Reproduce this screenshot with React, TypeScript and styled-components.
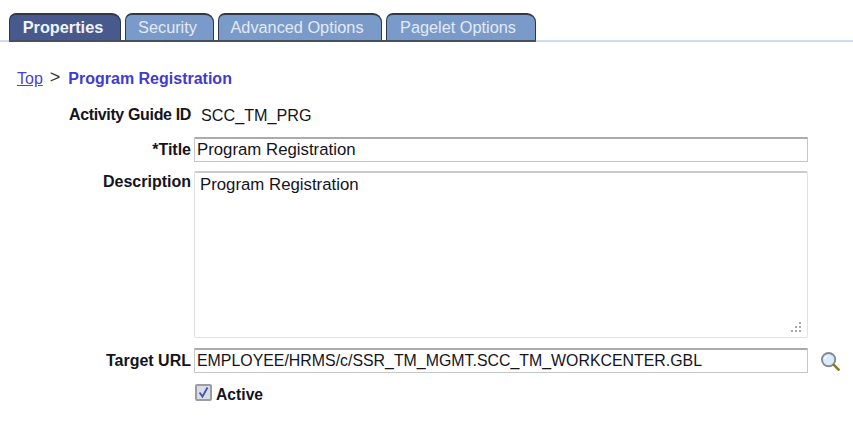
import React from "react";
import styled, { createGlobalStyle } from "styled-components";

const GlobalStyle = createGlobalStyle`
  html, body {
    margin: 0;
    padding: 0;
    background: #fff;
    font-family: "Liberation Sans", Arial, sans-serif;
  }
`;

const Page = styled.div`
  width: 853px;
  height: 422px;
  overflow: hidden;
  padding-top: 13px;
  box-sizing: border-box;
`;

const TabBar = styled.div`
  display: flex;
  align-items: flex-end;
  padding-left: 9px;
  height: 29px;
  box-sizing: border-box;
  border-bottom: 2px solid #cfdcf3;
`;

const TabGroup = styled.div`
  display: flex;
  gap: 4px;
  margin-bottom: -2px;
  border-bottom: 2px solid #4a4f5c;
`;

const Tab = styled.div<{ $active?: boolean; $width: number; $pad: number }>`
  width: ${(p) => p.$width}px;
  height: 27px;
  box-sizing: border-box;
  display: flex;
  align-items: center;
  justify-content: center;
  padding: 0 ${(p) => p.$pad}px 1px 0;
  border: 1px solid #2f3848;
  border-width: 2px 1px 0 1px;
  border-radius: 7px 9px 0 0;
  font-size: 16.3px;
  font-weight: ${(p) => (p.$active ? 700 : 400)};
  color: ${(p) => (p.$active ? "#f1f3f9" : "#e3eaf5")};
  background: ${(p) => (p.$active ? "#47598d" : "#7a9bc9")};
`;

const Crumbs = styled.div`
  display: flex;
  align-items: center;
  margin: 27px 0 0 17px;
  height: 20px;
  font-size: 16px;
`;

const TopLink = styled.a`
  color: #4a3fd6;
  text-decoration: underline;
`;

const Chevron = styled.span`
  color: #333;
  font-size: 18px;
  margin: -3px 8px 0 7px;
`;

const CrumbTitle = styled.span`
  color: #3f3bd0;
  font-weight: 700;
  font-size: 16px;
`;

const Form = styled.div`
  display: grid;
  grid-template-columns: 191px 614px 1fr;
  column-gap: 3px;
  margin-top: 13px;
  font-size: 16px;
  color: #14141c;
`;

const Label = styled.div<{ $top?: boolean; $mt?: number; $tight?: boolean }>`
  font-weight: 700;
  text-align: right;
  white-space: nowrap;
  align-self: ${(p) => (p.$top ? "start" : "center")};
  padding-top: ${(p) => (p.$top ? "2px" : "0")};
  margin-top: ${(p) => p.$mt ?? 0}px;
  letter-spacing: ${(p) => (p.$tight ? "-0.35px" : "normal")};
`;

const ReadOnlyValue = styled.div`
  grid-column: 2 / 4;
  height: 26px;
  display: flex;
  align-items: center;
  padding-left: 7px;
  font-size: 16.2px;
`;

const TextField = styled.div<{ $height: number; $mt: number; $size: number }>`
  height: ${(p) => p.$height}px;
  margin-top: ${(p) => p.$mt}px;
  box-sizing: border-box;
  display: flex;
  align-items: center;
  padding-left: 2px;
  border: 1px solid #c4c6c8;
  border-top: 2px solid #a9abae;
  border-radius: 1px;
  background: #fff;
  font-size: ${(p) => p.$size}px;
  white-space: nowrap;
`;

const TextArea = styled.div`
  position: relative;
  height: 167px;
  margin-top: 9px;
  box-sizing: border-box;
  padding: 2px 5px;
  border: 1px solid #dfe3e8;
  border-top: 2px solid #c9cbce;
  border-radius: 2px;
  font-size: 16.8px;
`;

const Grip = styled.svg`
  position: absolute;
  right: 6px;
  bottom: 5px;
`;

const IconCell = styled.div`
  display: flex;
  align-items: flex-start;
  padding: 14px 0 0 10px;
`;

const ActiveRow = styled.div`
  grid-column: 2 / 4;
  display: flex;
  align-items: center;
  gap: 4px;
  margin-top: 13px;
  padding-left: 1px;
  font-size: 15.7px;
  font-weight: 700;
`;

const CheckBox = styled.span`
  width: 17px;
  height: 17px;
  margin-top: -6px;
  box-sizing: border-box;
  display: inline-flex;
  align-items: center;
  justify-content: center;
  border: 2px solid #9a9da2;
  border-radius: 2px;
  background: #d8dce8;
`;

const tabs = [
  { label: "Properties", width: 112, pad: 4, active: true },
  { label: "Security", width: 89, pad: 4 },
  { label: "Advanced Options", width: 164, pad: 6 },
  { label: "Pagelet Options", width: 150, pad: 6 },
];

const gripDots = [
  [9, 0],
  [5, 4],
  [9, 4],
  [1, 8],
  [5, 8],
  [9, 8],
];

const App = () => {
  return (
    <Page>
      <GlobalStyle />
      <TabBar>
        <TabGroup>
          {tabs.map((t) => (
            <Tab key={t.label} $active={t.active} $width={t.width} $pad={t.pad}>
              {t.label}
            </Tab>
          ))}
        </TabGroup>
      </TabBar>

      <Crumbs>
        <TopLink>Top</TopLink>
        <Chevron>&gt;</Chevron>
        <CrumbTitle>Program Registration</CrumbTitle>
      </Crumbs>

      <Form>
        <Label $tight>Activity Guide ID</Label>
        <ReadOnlyValue>SCC_TM_PRG</ReadOnlyValue>

        <Label $mt={9}>*Title</Label>
        <TextField $height={25} $mt={9} $size={16.8}>Program Registration</TextField>
        <div />

        <Label $top $mt={9}>Description</Label>
        <TextArea>
          Program Registration
          <Grip width="11" height="10" viewBox="0 0 11 10">
            <g fill="#a8a8a8">
              {gripDots.map(([x, y]) => (
                <rect key={`${x}-${y}`} x={x} y={y} width="2" height="2" />
              ))}
            </g>
          </Grip>
        </TextArea>
        <div />

        <Label $mt={10}>Target URL</Label>
        <TextField $height={25} $mt={10} $size={15.9}>EMPLOYEE/HRMS/c/SSR_TM_MGMT.SCC_TM_WORKCENTER.GBL</TextField>
        <IconCell>
          <svg width="19" height="19" viewBox="0 0 20 20">
            <circle cx="8" cy="8" r="7" fill="#d7ebfb" stroke="#858a91" strokeWidth="2" />
            <path d="M4 7.5a4.2 4.2 0 0 1 3.5-3.5" fill="none" stroke="#fff" strokeWidth="1.4" />
            <path d="M13.5 13.5l5 5" stroke="#8a7a2c" strokeWidth="2.8" strokeLinecap="round" />
          </svg>
        </IconCell>

        <div />
        <ActiveRow>
          <CheckBox>
            <svg width="13" height="13" viewBox="0 0 13 13">
              <path d="M2.5 6.5l3 4 5-9" fill="none" stroke="#3f56a0" strokeWidth="1.8" />
            </svg>
          </CheckBox>
          Active
        </ActiveRow>
      </Form>
    </Page>
  );
};

export default App;
